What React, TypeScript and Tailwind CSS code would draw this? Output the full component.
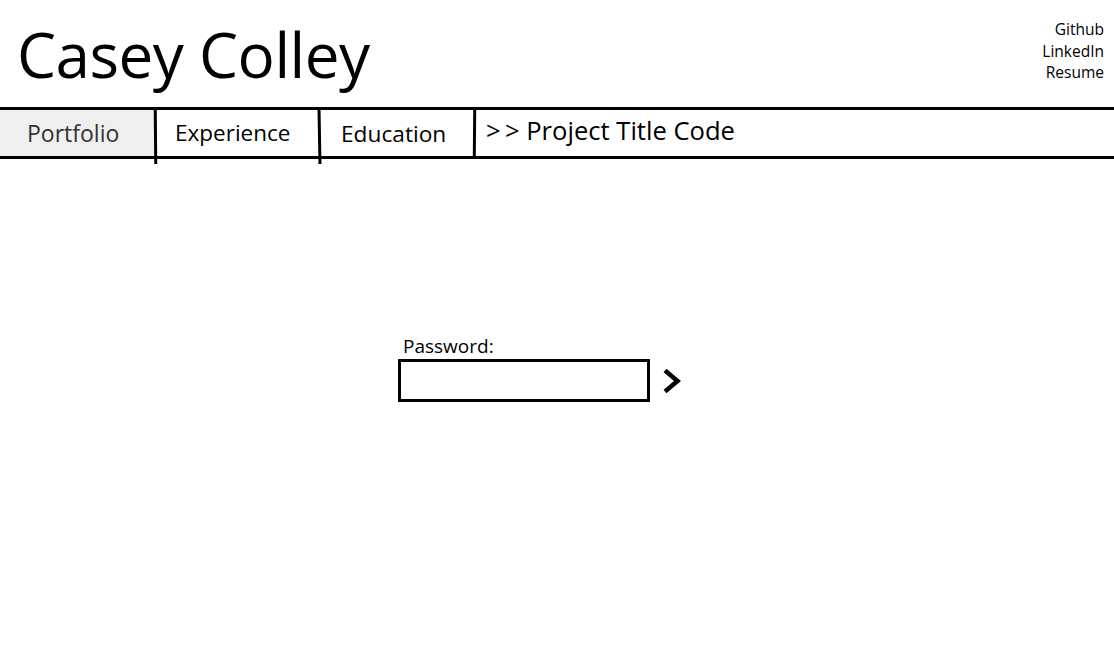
import React from "react";

export default function App() {
  const font = { fontFamily: '"Open Sans", "Noto Sans", sans-serif' };
  return (
    <div className="w-[1114px] h-[672px] bg-white text-black overflow-hidden" style={font}>
      <div className="flex justify-between h-[107px]">
        <h1 className="pl-[17px] pt-[14px] text-[62px] leading-[80px] tracking-[-0.5px]">Casey Colley</h1>
        <div className="flex flex-col items-end pr-[10px] pt-[19px] text-[15.5px] leading-[21.5px]">
          <span>Github</span>
          <span>LinkedIn</span>
          <span>Resume</span>
        </div>
      </div>
      <div className="relative h-[52px] border-t-[3px] border-b-[3px] border-black flex">
        <div className="w-[154px] bg-[#efefef] flex items-center pl-[27px] text-[23px] text-[#333]">Portfolio</div>
        <div className="relative w-[3px] bg-black h-[54px] -mb-[6px] -rotate-[0.5deg]" />
        <div className="w-[161px] flex items-center pl-[18px] text-[22.5px]">Experience</div>
        <div className="relative w-[3px] bg-black h-[54px] -mb-[6px] -rotate-[1deg]" />
        <div className="w-[152px] flex items-center pl-[20px] text-[22.7px] pt-[2px]">Education</div>
        <div className="relative w-[3px] bg-black h-[48px] rotate-[0.5deg]" />
        <div className="flex-1 flex items-center pl-[10px] text-[25.6px] pb-[3px]">&gt;&thinsp;&gt; Project Title Code</div>
      </div>
      <div className="pl-[398px] pt-[175px]">
        <div className="pl-[5px] text-[19px] leading-[24px]">Password:</div>
        <div className="flex items-center mt-[1px]">
          <input type="password" className="w-[252px] h-[43px] border-[3px] border-black outline-none" />
          <svg width="22" height="26" viewBox="0 0 22 26" className="ml-[10px] mb-[-1px]">
            <path d="M5 2.5 L17.5 13 L5 23.5" fill="none" stroke="black" strokeWidth="4.5" strokeLinejoin="miter" strokeLinecap="butt" />
          </svg>
        </div>
      </div>
    </div>
  );
}
